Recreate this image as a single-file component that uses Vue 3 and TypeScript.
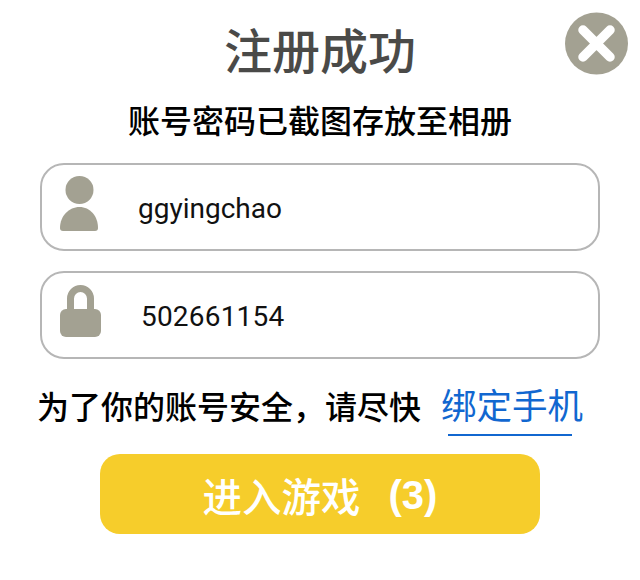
<template>
  <div class="panel">
    <button class="close" type="button" aria-label="关闭">
      <svg width="63" height="63" viewBox="0 0 63 63">
        <ellipse cx="31.5" cy="31.5" rx="31.5" ry="31" fill="#a3a192" />
        <path d="M18 18 L45 45 M45 18 L18 45" stroke="#fff" stroke-width="9.5" stroke-linecap="round" />
      </svg>
    </button>

    <h1 class="title">注册成功</h1>
    <p class="subtitle">账号密码已截图存放至相册</p>

    <div class="field">
      <svg class="icon" width="40" height="56" viewBox="0 0 40 56">
        <circle cx="19.5" cy="14" r="14" fill="#a3a192" />
        <path d="M3 55 a3 3 0 0 1 -3 -3 C0 40 9 31 19.5 31 C30 31 38 40 38 52 a3 3 0 0 1 -3 3 Z" fill="#a3a192" />
      </svg>
      <span class="value">{{ account }}</span>
    </div>

    <div class="field">
      <svg class="icon" width="42" height="54" viewBox="0 0 42 54">
        <path d="M10.5 25 V13.5 a10 10 0 0 1 20 0 V25" fill="none" stroke="#a3a192" stroke-width="7" />
        <rect x="0" y="24" width="41" height="28" rx="6" fill="#a3a192" />
      </svg>
      <span class="value value-pwd">{{ password }}</span>
    </div>

    <div class="notice">
      <span class="notice-text">为了你的账号安全，请尽快</span>
      <a class="bind">绑定手机</a>
    </div>

    <button class="enter" type="button">
      <span>进入游戏</span>
      <span class="count">({{ countdown }})</span>
    </button>
  </div>
</template>

<script setup lang="ts">
const account = 'ggyingchao'
const password = '502661154'
const countdown = 3
</script>

<style scoped>
.panel {
  position: relative;
  width: 640px;
  height: 580px;
  box-sizing: border-box;
  padding-top: 16px;
  display: flex;
  flex-direction: column;
  align-items: center;
  background: #fff;
  font-family: "Noto Sans CJK SC", sans-serif;
}

.close {
  position: absolute;
  top: 12px;
  left: 565px;
  padding: 0;
  border: none;
  background: none;
  line-height: 0;
}

.title {
  margin: 0;
  height: 64px;
  font-size: 48px;
  line-height: 64px;
  font-weight: 500;
  color: #4a4a48;
}

.subtitle {
  margin: 17px 0 0;
  height: 44px;
  font-size: 32px;
  line-height: 44px;
  font-weight: 500;
  color: #000;
}

.field {
  width: 560px;
  height: 88px;
  margin-top: 20px;
  box-sizing: border-box;
  display: flex;
  align-items: center;
  padding-left: 18px;
  border: 2px solid #b6b6b6;
  border-radius: 24px;
}

.subtitle + .field {
  margin-top: 22px;
}

.icon {
  flex: none;
  margin-top: -6px;
}

.value {
  margin-left: 38px;
  font-family: Roboto, sans-serif;
  font-size: 28px;
  color: #111;
  padding-top: 3px;
}

.value-pwd {
  margin-left: 39px;
  letter-spacing: 0.2px;
}

.notice {
  width: 640px;
  height: 60px;
  margin-top: 16px;
  margin-bottom: 1px;
  box-sizing: border-box;
  padding-left: 37px;
  display: flex;
  align-items: center;
}

.notice-text {
  font-size: 32px;
  font-weight: 500;
  color: #000;
}

.bind {
  position: relative;
  top: -2px;
  margin-left: 20px;
  font-size: 35.5px;
  color: #1167d0;
}

.bind::after {
  content: "";
  position: absolute;
  left: 7px;
  bottom: -7px;
  width: 124px;
  height: 2px;
  background: #1167d0;
}

.enter {
  width: 440px;
  height: 80px;
  margin-top: 18px;
  padding: 0;
  display: flex;
  align-items: center;
  justify-content: center;
  gap: 28px;
  border: none;
  border-radius: 20px;
  background: #f6cd2b;
  color: #fff;
  font-family: "Noto Sans CJK SC", sans-serif;
  font-size: 39.5px;
  font-weight: 500;
}

.count {
  font-family: "Liberation Sans", sans-serif;
  font-size: 40px;
  font-weight: 700;
  margin-top: 2px;
}
</style>
